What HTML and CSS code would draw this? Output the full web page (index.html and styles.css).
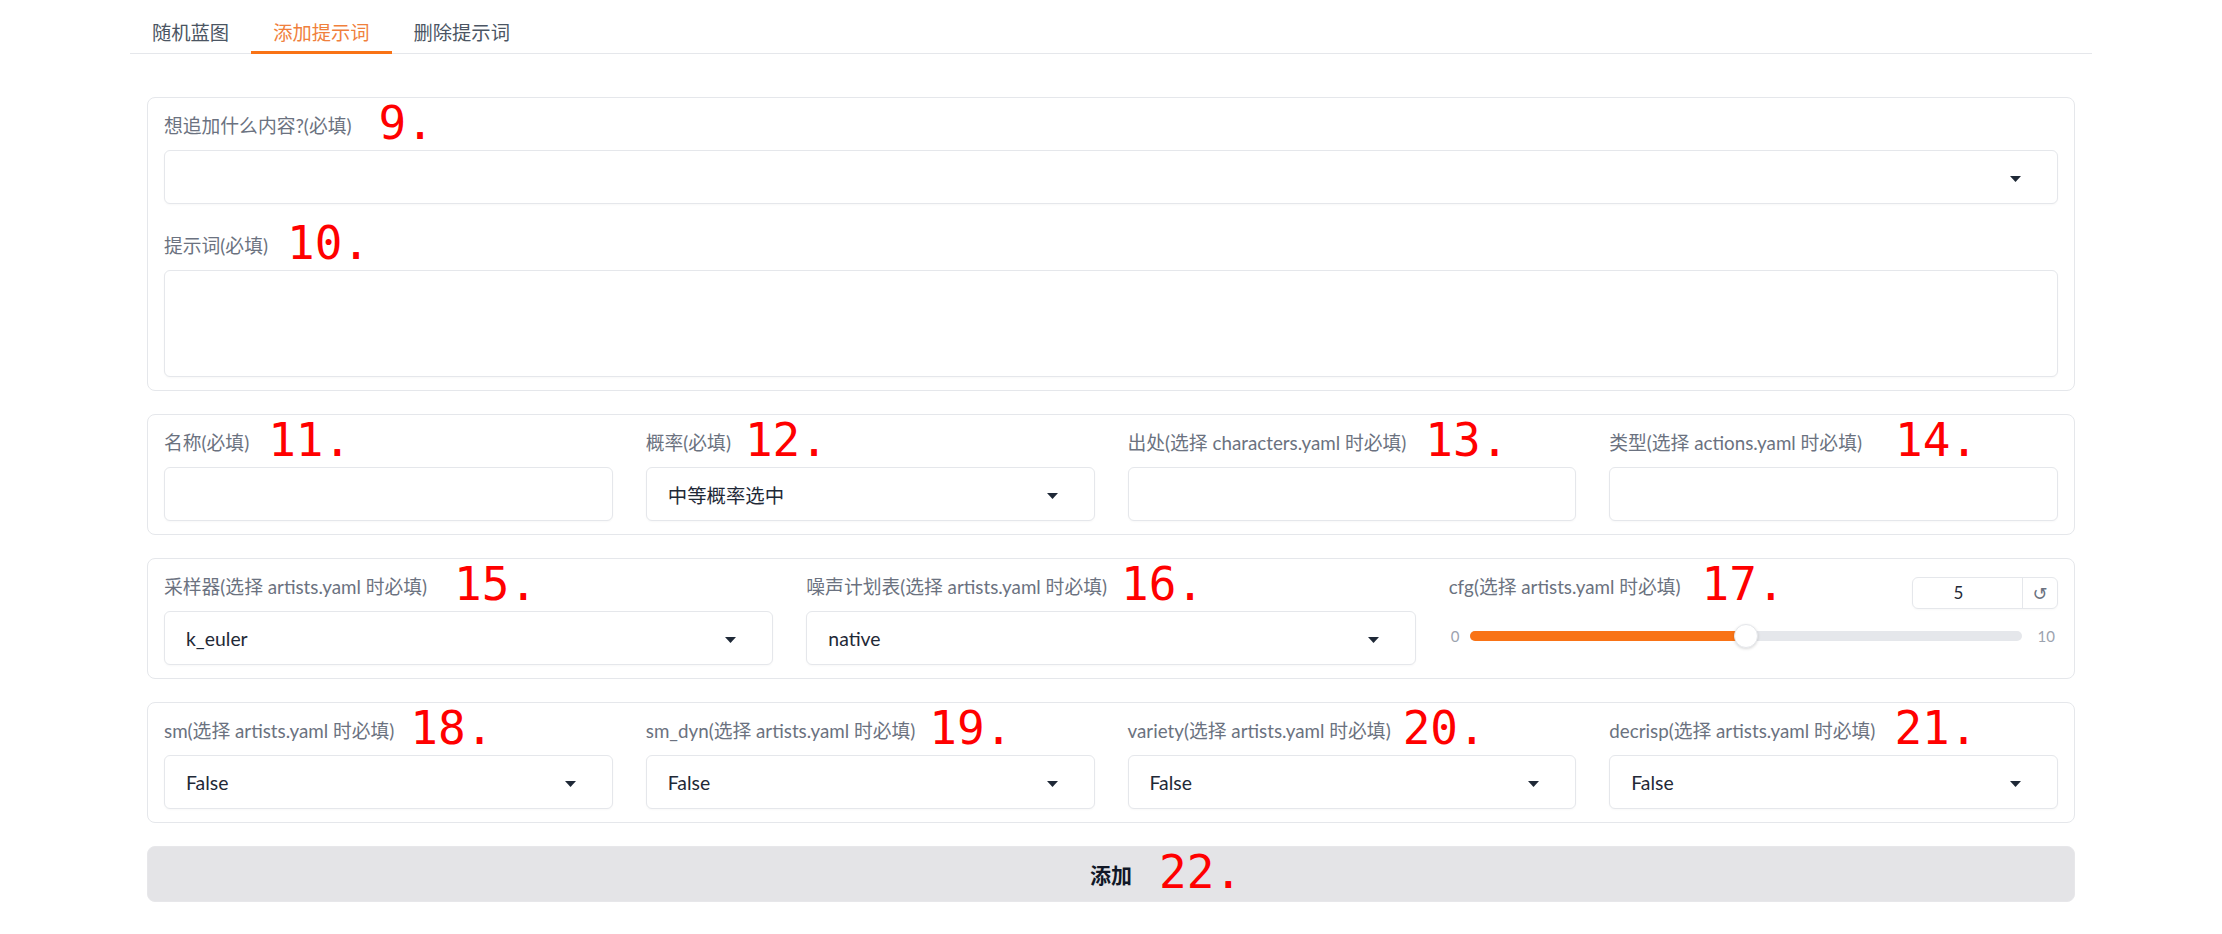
FILE: index.html
```html
<!DOCTYPE html>
<html lang="zh">
<head>
<meta charset="utf-8">
<title>添加提示词</title>
<link rel="stylesheet" href="styles.css">
</head>
<body>
<div class="app">
  <nav class="tabs">
    <button class="tab">随机蓝图</button>
    <button class="tab active">添加提示词</button>
    <button class="tab">删除提示词</button>
  </nav>

  <main class="tab-body">
    <section class="panel stack">
      <div class="field">
        <div class="label-row"><span class="label">想追加什么内容?(必填)<span class="ann g-27">9.</span></span></div>
        <div class="select">
          <span class="value"></span>
          <svg class="caret" viewBox="0 0 11 6" width="11" height="6"><path d="M0 0H11L5.5 6Z"/></svg>
        </div>
      </div>
      <div class="field">
        <div class="label-row"><span class="label">提示词(必填)<span class="ann g-19">10.</span></span></div>
        <textarea class="textarea"></textarea>
      </div>
    </section>

    <section class="panel cols-4">
      <div class="field">
        <div class="label-row"><span class="label">名称(必填)<span class="ann g-19">11.</span></span></div>
        <div class="input"></div>
      </div>
      <div class="field">
        <div class="label-row"><span class="label">概率(必填)<span class="ann g-14">12.</span></span></div>
        <div class="select">
          <span class="value">中等概率选中</span>
          <svg class="caret" viewBox="0 0 11 6" width="11" height="6"><path d="M0 0H11L5.5 6Z"/></svg>
        </div>
      </div>
      <div class="field">
        <div class="label-row"><span class="label">出处(选择 characters.yaml 时必填)<span class="ann g-19">13.</span></span></div>
        <div class="input"></div>
      </div>
      <div class="field">
        <div class="label-row"><span class="label">类型(选择 actions.yaml 时必填)<span class="ann g-33">14.</span></span></div>
        <div class="input"></div>
      </div>
    </section>

    <section class="panel cols-3">
      <div class="field">
        <div class="label-row"><span class="label">采样器(选择 artists.yaml 时必填)<span class="ann g-27">15.</span></span></div>
        <div class="select">
          <span class="value">k_euler</span>
          <svg class="caret" viewBox="0 0 11 6" width="11" height="6"><path d="M0 0H11L5.5 6Z"/></svg>
        </div>
      </div>
      <div class="field">
        <div class="label-row"><span class="label">噪声计划表(选择 artists.yaml 时必填)<span class="ann g-14">16.</span></span></div>
        <div class="select">
          <span class="value">native</span>
          <svg class="caret" viewBox="0 0 11 6" width="11" height="6"><path d="M0 0H11L5.5 6Z"/></svg>
        </div>
      </div>
      <div class="field">
        <div class="slider-head">
          <span class="label">cfg(选择 artists.yaml 时必填)<span class="ann g-21">17.</span></span>
          <div class="num">
            <span class="num-val">5</span>
            <span class="num-reset">↺</span>
          </div>
        </div>
        <div class="slider-row">
          <span class="range-lbl min">0</span>
          <div class="track" style="--value: 50%">
            <div class="fill"></div>
            <div class="thumb"></div>
          </div>
          <span class="range-lbl max">10</span>
        </div>
      </div>
    </section>

    <section class="panel cols-4">
      <div class="field">
        <div class="label-row"><span class="label">sm(选择 artists.yaml 时必填)<span class="ann g-16">18.</span></span></div>
        <div class="select">
          <span class="value">False</span>
          <svg class="caret" viewBox="0 0 11 6" width="11" height="6"><path d="M0 0H11L5.5 6Z"/></svg>
        </div>
      </div>
      <div class="field">
        <div class="label-row"><span class="label">sm_dyn(选择 artists.yaml 时必填)<span class="ann g-14">19.</span></span></div>
        <div class="select">
          <span class="value">False</span>
          <svg class="caret" viewBox="0 0 11 6" width="11" height="6"><path d="M0 0H11L5.5 6Z"/></svg>
        </div>
      </div>
      <div class="field">
        <div class="label-row"><span class="label">variety(选择 artists.yaml 时必填)<span class="ann g-12">20.</span></span></div>
        <div class="select">
          <span class="value">False</span>
          <svg class="caret" viewBox="0 0 11 6" width="11" height="6"><path d="M0 0H11L5.5 6Z"/></svg>
        </div>
      </div>
      <div class="field">
        <div class="label-row"><span class="label">decrisp(选择 artists.yaml 时必填)<span class="ann g-19">21.</span></span></div>
        <div class="select">
          <span class="value">False</span>
          <svg class="caret" viewBox="0 0 11 6" width="11" height="6"><path d="M0 0H11L5.5 6Z"/></svg>
        </div>
      </div>
    </section>

    <button class="submit"><span class="submit-text">添加<span class="ann g-27">22.</span></span></button>
  </main>
</div>
</body>
</html>
```

FILE: styles.css
```css
* { box-sizing: border-box; }

html, body {
  margin: 0;
  background: #ffffff;
}

body {
  font-family: "Lato", "Noto Sans CJK SC", sans-serif;
  font-size: 18.8px;
  color: #1f2937;
}

.app {
  width: 1962px;
  margin: 0 auto;
  padding-top: 12px;
}

/* Tabs */
.tabs {
  display: flex;
  border-bottom: 1px solid #e5e7eb;
}

.tab {
  font: inherit;
  font-size: 19.3px;
  background: none;
  border: 0;
  border-bottom: 3px solid transparent;
  margin-bottom: -1px;
  height: 42px;
  padding: 3px 22px 0;
  line-height: 36px;
  color: #4b5563;
  cursor: pointer;
}

.tab.active {
  color: #f0803c;
  border-bottom-color: #f97316;
}

/* Body */
.tab-body {
  display: flex;
  flex-direction: column;
  gap: 23px;
  padding: 43px 17px 0;
}

.panel {
  background: #ffffff;
  border: 1px solid #e5e7eb;
  border-radius: 8px;
  padding: 16px 16px 13px;
}

.stack {
  display: flex;
  flex-direction: column;
  gap: 30px;
}

.cols-4 {
  display: grid;
  grid-template-columns: repeat(4, 1fr);
  column-gap: 33px;
}

.cols-3 {
  display: grid;
  grid-template-columns: repeat(3, 1fr);
  column-gap: 33px;
}

.field {
  display: flex;
  flex-direction: column;
  min-width: 0;
}

.label-row {
  display: flex;
  align-items: center;
  height: 24px;
  margin-bottom: 12px;
}

.label {
  position: relative;
  color: #6b7280;
  line-height: 24px;
  white-space: nowrap;
}

/* red annotation numbers overlaid after labels */
.ann {
  position: absolute;
  left: 100%;
  top: 50%;
  transform: translateY(-50%);
  margin-top: -3px;
  font-family: "DejaVu Sans Mono", monospace;
  font-size: 46px;
  font-weight: 400;
  line-height: 1;
  color: #ff0000;
  white-space: nowrap;
}

.g-12 { margin-left: 12px; }
.g-14 { margin-left: 14px; }
.g-16 { margin-left: 16px; }
.g-19 { margin-left: 19px; }
.g-21 { margin-left: 21px; }
.g-27 { margin-left: 27px; }
.g-33 { margin-left: 33px; }

/* Inputs */
.input,
.select,
.textarea {
  background: #ffffff;
  border: 1px solid #e5e7eb;
  border-radius: 6px;
  box-shadow: 0 1px 2px rgba(0, 0, 0, 0.03);
}

.input {
  height: 54px;
}

.select {
  height: 54px;
  display: flex;
  align-items: center;
  padding: 0 36px 0 21px;
}

.value {
  font-size: 19.4px;
  color: #1f2937;
  white-space: nowrap;
}

.caret {
  margin-left: auto;
  margin-top: 4px;
  fill: #1f2937;
  flex: none;
}

.textarea {
  display: block;
  width: 100%;
  height: 107px;
  resize: none;
  font: inherit;
  outline: none;
}

/* Slider */
.slider-head {
  display: flex;
  justify-content: space-between;
  align-items: flex-start;
}

.num {
  display: flex;
  width: 146px;
  height: 32px;
  margin-top: 2px;
  border: 1px solid #e5e7eb;
  border-radius: 6px;
  box-shadow: 0 1px 2px rgba(0, 0, 0, 0.03);
}

.num-val {
  flex: 1;
  text-align: center;
  padding-right: 18px;
  line-height: 30px;
  font-size: 17px;
  color: #1f2937;
}

.num-reset {
  width: 35px;
  border-left: 1px solid #e5e7eb;
  display: flex;
  align-items: center;
  justify-content: center;
  font-family: "DejaVu Sans", sans-serif;
  font-size: 18px;
  color: #6b7280;
}

.slider-row {
  display: flex;
  align-items: center;
  height: 24px;
  margin-top: 15px;
}

.range-lbl {
  font-size: 15px;
  color: #9ca3af;
}

.range-lbl.min {
  margin-left: 2px;
  margin-right: 11px;
}

.range-lbl.max {
  margin-left: 16px;
  margin-right: 3px;
}

.track {
  position: relative;
  flex: 1;
  height: 10px;
  border-radius: 5px;
  background: #e5e7eb;
}

.fill {
  width: var(--value);
  height: 100%;
  border-radius: 5px;
  background: #f97316;
}

.thumb {
  position: absolute;
  left: var(--value);
  top: 50%;
  width: 24px;
  height: 24px;
  transform: translate(-50%, -50%);
  border-radius: 50%;
  background: #ffffff;
  border: 1px solid #e5e7eb;
  box-shadow: 0 1px 3px rgba(0, 0, 0, 0.15);
}

/* Submit */
.submit {
  height: 56px;
  width: 100%;
  border: 1px solid #e7e7ea;
  border-radius: 8px;
  background: #e4e4e7;
  font: inherit;
  font-size: 21px;
  font-weight: 700;
  color: #111827;
  cursor: pointer;
}

.submit-text {
  position: relative;
}
```
